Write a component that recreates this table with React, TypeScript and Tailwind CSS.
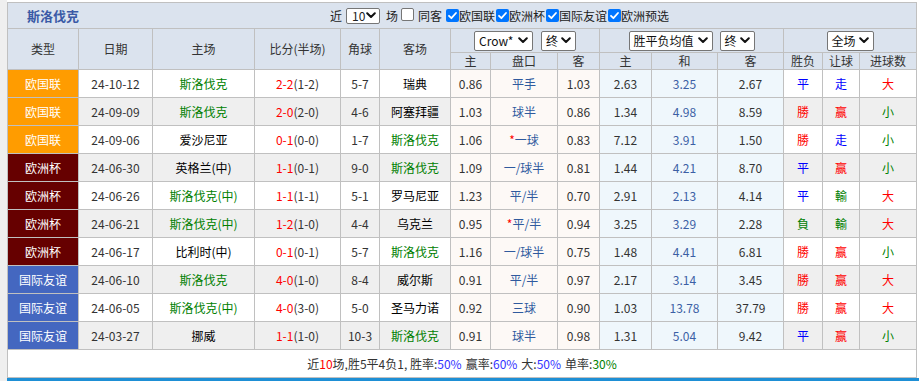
import React from "react";

type Row = {
  type: string;
  date: string;
  home: string;
  homeG: boolean;
  score: string;
  half: string;
  corner: string;
  away: string;
  awayG: boolean;
  o1: string;
  pan: string;
  o2: string;
  w: string;
  d: string;
  l: string;
  r1: string;
  r2: string;
  r3: string;
};

const mk = (a: any[]): Row => ({
  type: a[0], date: a[1], home: a[2], homeG: a[3], score: a[4], half: a[5], corner: a[6],
  away: a[7], awayG: a[8], o1: a[9], pan: a[10], o2: a[11], w: a[12], d: a[13], l: a[14],
  r1: a[15], r2: a[16], r3: a[17],
});

const rows: Row[] = [
  ["欧国联", "24-10-12", "斯洛伐克", true, "2-2", "1-2", "5-7", "瑞典", false, "0.86", "平手", "1.03", "2.63", "3.25", "2.67", "平", "走", "大"],
  ["欧国联", "24-09-09", "斯洛伐克", true, "2-0", "2-0", "4-6", "阿塞拜疆", false, "1.03", "球半", "0.86", "1.34", "4.98", "8.59", "勝", "赢", "小"],
  ["欧国联", "24-09-06", "爱沙尼亚", false, "0-1", "0-0", "1-7", "斯洛伐克", true, "1.06", "*一球", "0.83", "7.12", "3.91", "1.50", "勝", "走", "小"],
  ["欧洲杯", "24-06-30", "英格兰(中)", false, "1-1", "0-1", "9-0", "斯洛伐克", true, "1.09", "一/球半", "0.81", "1.44", "4.21", "8.70", "平", "赢", "小"],
  ["欧洲杯", "24-06-26", "斯洛伐克(中)", true, "1-1", "1-1", "5-1", "罗马尼亚", false, "1.23", "平/半", "0.70", "2.91", "2.13", "4.14", "平", "輸", "大"],
  ["欧洲杯", "24-06-21", "斯洛伐克(中)", true, "1-2", "1-0", "4-4", "乌克兰", false, "0.95", "*平/半", "0.94", "3.25", "3.29", "2.28", "負", "輸", "大"],
  ["欧洲杯", "24-06-17", "比利时(中)", false, "0-1", "0-1", "5-7", "斯洛伐克", true, "1.16", "一/球半", "0.75", "1.48", "4.41", "6.81", "勝", "赢", "小"],
  ["国际友谊", "24-06-10", "斯洛伐克", true, "4-0", "1-0", "8-4", "威尔斯", false, "0.91", "平/半", "0.97", "2.17", "3.14", "3.45", "勝", "赢", "大"],
  ["国际友谊", "24-06-05", "斯洛伐克(中)", true, "4-0", "3-0", "5-0", "圣马力诺", false, "0.92", "三球", "0.90", "1.03", "13.78", "37.79", "勝", "赢", "大"],
  ["国际友谊", "24-03-27", "挪威", false, "1-1", "1-0", "10-3", "斯洛伐克", true, "0.91", "球半", "0.98", "1.31", "5.04", "9.42", "平", "赢", "小"],
].map(mk);

const typeBg: Record<string, string> = {
  "欧国联": "bg-[#ff9c00]",
  "欧洲杯": "bg-[#660000]",
  "国际友谊": "bg-[#4467c0]",
};

const resColor = (c: string) => {
  if (c === "平" || c === "走") return "text-[#0000ff]";
  if (c === "勝" || c === "赢" || c === "大") return "text-[#ff0000]";
  return "text-[#008000]";
};

const Chevron = () => (
  <svg width="10" height="7" viewBox="0 0 10 7" className="shrink-0">
    <polyline points="1.2,1.2 5,5 8.8,1.2" fill="none" stroke="#111" strokeWidth="2" strokeLinecap="round" strokeLinejoin="round" />
  </svg>
);

const Sel = ({ label, w }: { label: string; w: string }) => (
  <div className={`${w} h-[20px] inline-flex items-center justify-between border border-[#767676] rounded-[2px] bg-white pl-[4px] pr-[4px] text-[12px] text-[#111] leading-none`}>
    <span>{label}</span>
    <Chevron />
  </div>
);

const Check = ({ on }: { on: boolean }) =>
  on ? (
    <span className="w-[13px] h-[13px] rounded-[2px] bg-[#0075ff] inline-flex items-center justify-center shrink-0">
      <svg width="11" height="11" viewBox="0 0 11 11">
        <polyline points="2,5.8 4.4,8.2 9,3" fill="none" stroke="white" strokeWidth="1.8" strokeLinecap="round" strokeLinejoin="round" />
      </svg>
    </span>
  ) : (
    <span className="w-[13px] h-[13px] rounded-[2px] bg-white border border-[#767676] inline-block shrink-0" />
  );

const cell = "flex items-center justify-center text-[12px] leading-none";

export default function App() {
  return (
    <div className="w-[919px] h-[381px] bg-white flex overflow-hidden font-['Noto_Sans_CJK_SC',sans-serif] text-[#333]">
      <div className="w-[7px] h-full bg-[#efefef] shrink-0" />
      <div className="w-[912px] flex flex-col pt-[2px]">
        <div className="w-[910px]">
          {/* title bar */}
          <div className="h-[26px] border-t border-x border-[#c0c0c0] bg-[#dbe3ee] flex items-center">
            <div className="w-[322px] pl-[19px] text-[13px] font-bold text-[#3a5aa6]">斯洛伐克</div>
            <div className="flex items-center text-[12px] text-[#222]">
              <span>近</span>
              <div className="ml-[4px] w-[34px] h-[16px] inline-flex items-center justify-between border border-[#767676] rounded-[2px] bg-white pl-[5px] pr-[3px] leading-none">
                <span>10</span>
                <Chevron />
              </div>
              <span className="ml-[6px]">场</span>
              <span className="ml-[3px]"><Check on={false} /></span>
              <span className="ml-[4px]">同客</span>
              <span className="ml-[4px]"><Check on={true} /></span>
              <span>欧国联</span>
              <span className="ml-[1px]"><Check on={true} /></span>
              <span>欧洲杯</span>
              <span className="ml-[1px]"><Check on={true} /></span>
              <span>国际友谊</span>
              <span className="ml-[1px]"><Check on={true} /></span>
              <span>欧洲预选</span>
            </div>
          </div>

          {/* table grid */}
          <div className="grid grid-cols-[70px_73px_101px_85px_38px_70px_39px_66px_41px_51px_65px_65px_38px_36px_56px] grid-rows-[23px_16px_repeat(10,27px)] gap-[1px] p-[1px] bg-[#c0c0c0]">
            {["类型", "日期", "主场", "比分(半场)", "角球", "客场"].map((h) => (
              <div key={h} className={`${cell} row-span-2 bg-[#dbe3ee]`}>{h}</div>
            ))}
            <div className={`${cell} col-span-3 bg-[#dbe3ee] gap-[8px]`}>
              <Sel label="Crow*" w="w-[59px]" />
              <Sel label="终" w="w-[35px]" />
            </div>
            <div className={`${cell} col-span-3 bg-[#dbe3ee] gap-[7px]`}>
              <Sel label="胜平负均值" w="w-[84px]" />
              <Sel label="终" w="w-[35px]" />
            </div>
            <div className={`${cell} col-span-3 bg-[#dbe3ee]`}>
              <Sel label="全场" w="w-[47px]" />
            </div>
            {["主", "盘口", "客", "主", "和", "客", "胜负", "让球", "进球数"].map((h, i) => (
              <div key={i} className={`${cell} bg-[#dbe3ee]`}>{h}</div>
            ))}

            {rows.map((r, i) => {
              const alt = i % 2 === 1 ? "bg-[#efefef]" : "bg-white";
              const pink = "bg-[#fdf9f6]";
              const blue = "bg-[#eff7fc]";
              const star = r.pan.startsWith("*");
              return (
                <React.Fragment key={i}>
                  <div className={`${cell} ${typeBg[r.type]} text-white`}>{r.type}</div>
                  <div className={`${cell} ${alt}`}>{r.date}</div>
                  <div className={`${cell} ${alt} ${r.homeG ? "text-[#008000]" : "text-black"}`}>{r.home}</div>
                  <div className={`${cell} ${alt}`}>
                    <span className="text-[#ff0000]">{r.score}</span>
                    <span>({r.half})</span>
                  </div>
                  <div className={`${cell} ${alt}`}>{r.corner}</div>
                  <div className={`${cell} ${alt} ${r.awayG ? "text-[#008000]" : "text-black"}`}>{r.away}</div>
                  <div className={`${cell} ${pink}`}>{r.o1}</div>
                  <div className={`${cell} ${pink} text-[#2f5a9e]`}>
                    {star && <span className="text-[#ff0000]">*</span>}
                    {star ? r.pan.slice(1) : r.pan}
                  </div>
                  <div className={`${cell} ${pink}`}>{r.o2}</div>
                  <div className={`${cell} ${blue}`}>{r.w}</div>
                  <div className={`${cell} ${blue} text-[#3c5fa5]`}>{r.d}</div>
                  <div className={`${cell} ${blue}`}>{r.l}</div>
                  <div className={`${cell} ${alt} ${resColor(r.r1)}`}>{r.r1}</div>
                  <div className={`${cell} ${alt} ${resColor(r.r2)}`}>{r.r2}</div>
                  <div className={`${cell} ${alt} ${resColor(r.r3)}`}>{r.r3}</div>
                </React.Fragment>
              );
            })}
          </div>

          {/* footer */}
          <div className="h-[28px] border-x border-b border-[#c0c0c0] bg-white flex items-center justify-center text-[12px] text-[#333]">
            <span>近</span>
            <span className="text-[#ff0000]">10</span>
            <span>场,胜5平4负1, 胜率:</span>
            <span className="text-[#3333ff]">50%</span>
            <span className="ml-[4px]">赢率:</span>
            <span className="text-[#3333ff]">60%</span>
            <span className="ml-[4px]">大:</span>
            <span className="text-[#3333ff]">50%</span>
            <span className="ml-[4px]">单率:</span>
            <span className="text-[#008000]">30%</span>
          </div>
        </div>
        <div className="h-[3px] w-[912px] bg-[#1e8fd5]" />
      </div>
    </div>
  );
}
